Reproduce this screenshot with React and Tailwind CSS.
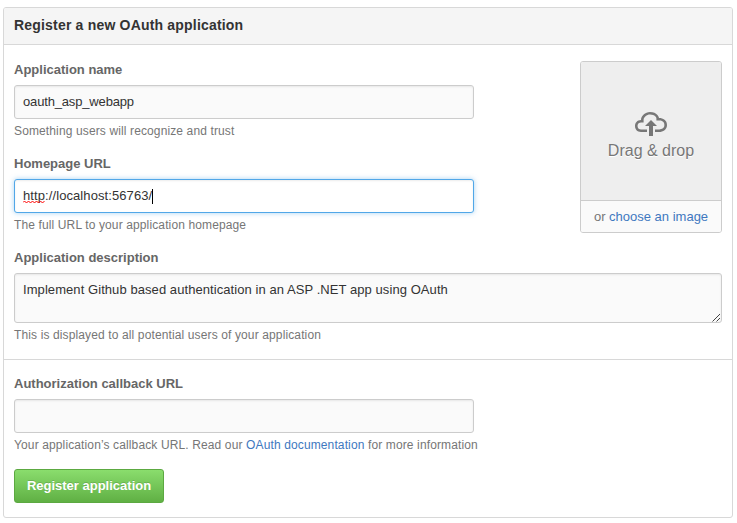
const fieldBase =
  "rounded-[3px] border px-2 text-[13px] leading-5 text-[#333]";
const idle =
  "border-[#ccc] bg-[#fafafa] shadow-[inset_0_1px_2px_rgba(0,0,0,0.075)]";
const focused =
  "border-[#51a7e8] bg-white shadow-[inset_0_1px_2px_rgba(0,0,0,0.075),0_0_5px_rgba(81,167,232,0.5)]";

function Field({ label, help, children }) {
  return (
    <div className="h-[94px]">
      <div className="mb-[5px] h-5 text-[13px] leading-5 font-bold text-[#666]">{label}</div>
      {children}
      <div className="mt-[3px] text-xs leading-[18px] tracking-[0.125px] whitespace-nowrap text-[#767676]">{help}</div>
    </div>
  );
}

function TextBox({ active, children }) {
  return (
    <div
      role="textbox"
      className={`${fieldBase} ${active ? focused : idle} flex h-[34px] w-[460px] items-center`}
    >
      {children}
    </div>
  );
}

function ImageDrop() {
  return (
    <div className="flex h-[172px] w-[142px] flex-col overflow-hidden rounded-[3px] border border-[#ccc]">
      <div className="flex h-[138px] flex-col items-center bg-[#eee] pt-[46px] text-[#777]">
        <svg width="32" height="32" viewBox="0 0 16 16" fill="currentColor">
          <path d="M7 9H5l3-3 3 3H9v5H7V9zm5-4c0-.44-.91-3-4.5-3C5.08 2 3 3.92 3 6 1.02 6 0 7.52 0 9c0 1.53 1 3 3 3h3v-1.3H3c-1.62 0-1.7-1.42-1.7-1.7 0-.17.05-1.7 1.7-1.7h1.3V6c0-1.39 1.56-2.7 3.2-2.7 2.55 0 3.13 1.55 3.2 1.8v1.2H12c.81 0 2.7.22 2.7 2.2 0 2.09-2.25 2.2-2.7 2.2h-2V12h2c2.08 0 4-1.16 4-3.5C16 6.06 14.08 5 12 5z" />
        </svg>
        <div className="pt-px text-base leading-5 [text-shadow:0_1px_0_#fff]">Drag &amp; drop</div>
      </div>
      <div className="flex flex-1 items-center justify-center border-t border-[#ccc] bg-[#fafafa] text-[13px] whitespace-nowrap text-[#767676]">
        <span>
          or <a className="text-[#4078c0]">choose an image</a>
        </span>
      </div>
    </div>
  );
}

export default function App() {
  return (
    <div className="h-[523px] w-[737px] bg-white pt-[7px] pl-[3px] font-['Liberation_Sans',Arial,sans-serif]">
      <div className="h-[511px] w-[730px] overflow-hidden rounded-[3px] border border-[#d8d8d8] bg-white">
        <div className="h-[37px] border-b border-[#d8d8d8] bg-[#f5f5f5] px-2.5 text-sm leading-[35px] font-bold tracking-[0.19px] text-[#333]">
          Register a new OAuth application
        </div>
        <div className="h-[315px] border-b border-[#d8d8d8] px-2.5 pt-[15px]">
          <div className="flex justify-between">
            <div>
              <Field label="Application name" help="Something users will recognize and trust">
                <TextBox>
                  <span className="tracking-[-0.16px]">oauth_asp_webapp</span>
                </TextBox>
              </Field>
              <Field label="Homepage URL" help="The full URL to your application homepage">
                <TextBox active>
                  <span className="relative tracking-[0.09px]">
                    http
                    <svg className="absolute top-[14px] left-0" width="22" height="4" viewBox="0 0 22 4" fill="none" stroke="#f00">
                      <path d="M0 2.5 1.5 1 3.5 3 5.5 1 7.5 3 9.5 1 11.5 3 13.5 1 15.5 3 17.5 1 19.5 3 21.5 1" />
                    </svg>
                  </span>
                  <span className="tracking-[0.09px]">://localhost:56763/</span>
                  <span className="h-[15px] w-px bg-black" />
                </TextBox>
              </Field>
            </div>
            <div className="pt-px">
              <ImageDrop />
            </div>
          </div>
          <Field label="Application description" help="This is displayed to all potential users of your application">
            <div role="textbox" className={`${fieldBase} ${idle} flex h-[50px] justify-between pt-[6px] pr-0`}>
              <span className="tracking-[0.07px]">Implement Github based authentication in an ASP .NET app using OAuth</span>
              <svg className="self-end" width="10" height="10" viewBox="0 0 10 10" stroke="#444" fill="none">
                <path d="M1.5 9.5 9 2M5.5 9.5 9 6" />
              </svg>
            </div>
          </Field>
        </div>
        <div className="px-2.5 pt-[14px]">
          <Field
            label="Authorization callback URL"
            help={
              <>
                Your application’s callback URL. Read our{" "}
                <a className="text-[#4078c0]">OAuth documentation</a> for more information
              </>
            }
          >
            <TextBox />
          </Field>
          <button className="mt-px block h-[34px] w-[150px] rounded-[3px] border border-[#5ca941] bg-linear-to-b from-[#8add6d] to-[#60b044] text-[13px] leading-5 font-bold whitespace-nowrap text-white [text-shadow:0_-1px_0_rgba(0,0,0,0.15)]">
            Register application
          </button>
        </div>
      </div>
    </div>
  );
}
